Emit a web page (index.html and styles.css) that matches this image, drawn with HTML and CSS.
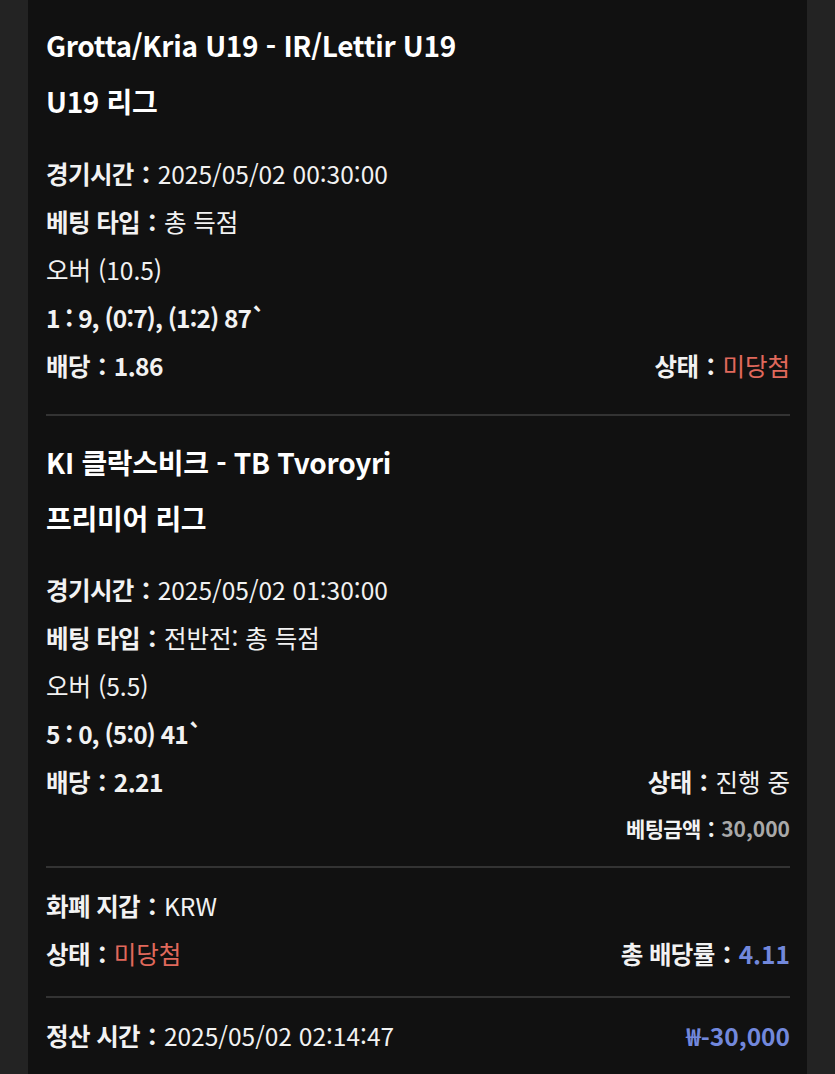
FILE: index.html
```html
<!DOCTYPE html>
<html lang="ko">
<head>
    <meta charset="UTF-8">
    <meta name="viewport" content="width=device-width, initial-scale=1.0">
    <title>베팅 내역</title>
    <link rel="stylesheet" href="styles.css">
</head>
<body>
    <div class="card">
        <!-- 첫 번째 경기 -->
        <div class="match first">
            <div class="match-title">Grotta/Kria U19 - IR/Lettir U19</div>
            <div class="match-title">U19 리그</div>
            <div class="details">
                <div class="row"><span class="label">경기시간：</span>2025/05/02 00:30:00</div>
                <div class="row"><span class="label">베팅 타입：</span>총 득점</div>
                <div class="row">오버 (10.5)</div>
                <div class="row score">1 : 9, (0:7), (1:2) 87`</div>
                <div class="row split">
                    <div><span class="label">배당：1.86</span></div>
                    <div><span class="label">상태：</span><span class="lost">미당첨</span></div>
                </div>
            </div>
        </div>

        <!-- 두 번째 경기 -->
        <div class="match second">
            <div class="match-title">KI 클락스비크 - TB Tvoroyri</div>
            <div class="match-title">프리미어 리그</div>
            <div class="details">
                <div class="row"><span class="label">경기시간：</span>2025/05/02 01:30:00</div>
                <div class="row"><span class="label">베팅 타입：</span>전반전: 총 득점</div>
                <div class="row">오버 (5.5)</div>
                <div class="row score">5 : 0, (5:0) 41`</div>
                <div class="row split">
                    <div><span class="label">배당：2.21</span></div>
                    <div><span class="label">상태：</span>진행 중</div>
                </div>
                <div class="row amount"><span class="label">베팅금액：</span><span class="muted">30,000</span></div>
            </div>
        </div>

        <!-- 요약 -->
        <div class="summary">
            <div class="row"><span class="label">화폐 지갑：</span>KRW</div>
            <div class="row split">
                <div><span class="label">상태：</span><span class="lost">미당첨</span></div>
                <div><span class="label">총 배당률：</span><span class="rate">4.11</span></div>
            </div>
        </div>

        <div class="settle">
            <div class="row split">
                <div><span class="label">정산 시간：</span>2025/05/02 02:14:47</div>
                <div class="rate">₩-30,000</div>
            </div>
        </div>
    </div>
</body>
</html>
```

FILE: styles.css
```css
/* 기본 */
* {
    margin: 0;
    padding: 0;
    box-sizing: border-box;
}
body {
    font-family: 'Noto Sans CJK KR', 'Noto Sans', sans-serif;
    background: #232323;
    color: #f2f2f2;
    min-height: 100vh;
}
.card {
    margin: 0 28px;
    padding: 0 17px 0 18px;
    background: #111111;
    min-height: 100vh;
}
.match,
.summary {
    border-bottom: 2px solid #333;
}
.match.first {
    padding: 17px 0 24px;
}
.match.second {
    padding: 18px 0 16px;
}
.match-title {
    font-size: 28px;
    font-weight: 700;
    letter-spacing: -0.3px;
    line-height: 56px;
    color: #fff;
}
.details {
    margin-top: 21px;
}
.match.second .details {
    margin-top: 20px;
}
.row {
    font-size: 24.5px;
    line-height: 48px;
    font-weight: 400;
}
.label {
    font-weight: 700;
    letter-spacing: -0.6px;
}
.score {
    font-weight: 700;
    letter-spacing: -1px;
}
.split {
    display: flex;
    justify-content: space-between;
}
.amount {
    text-align: right;
    font-size: 21px;
    line-height: 44px;
}
.muted {
    color: #a9a9a9;
    font-weight: 700;
}
.lost {
    color: #e0695c;
}
.rate {
    color: #7288dc;
    font-weight: 700;
}
.summary {
    padding: 14px 0 18px;
}
.settle {
    padding: 14px 0 0;
}
```
